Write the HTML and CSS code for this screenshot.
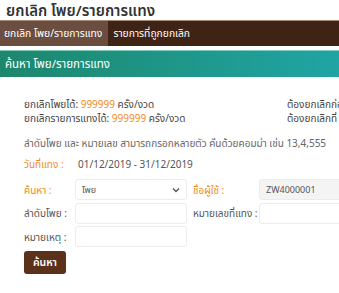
FILE: index.html
```html
<!DOCTYPE html>
<html lang="th">
    <head>
        <meta charset="utf-8"/>
        <title>ยกเลิก โพย/รายการแทง</title>
        <link rel="stylesheet" href="styles.css">
    </head>
    <body>
        <!-- Title -->
        <h1 class="pageTitle">ยกเลิก โพย/รายการแทง</h1>

        <!-- Tabs -->
        <div class="tabs">
            <div class="tab active">ยกเลิก โพย/รายการแทง</div>
            <div class="tab">รายการที่ถูกยกเลิก</div>
        </div>

        <!-- Search panel -->
        <div class="panelHead">ค้นหา โพย/รายการแทง</div>

        <div class="panelBody">
            <div class="limits">
                <div>ยกเลิกโพยได้: <span class="num">999999</span> ครั้ง/งวด</div>
                <div>ต้องยกเลิกก่อน</div>
                <div>ยกเลิกรายการแทงได้: <span class="num">999999</span> ครั้ง/งวด</div>
                <div>ต้องยกเลิกที่</div>
            </div>

            <p class="hint">ลำดับโพย และ หมายเลข สามารถกรอกหลายตัว คั่นด้วยคอมม่า เช่น 13,4,555</p>

            <div class="dateRow">
                <span class="label orange">วันที่แทง :</span>
                <span>01/12/2019 - 31/12/2019</span>
            </div>

            <div class="form">
                <label class="label orange">ค้นหา :</label>
                <div class="select">
                    <span>โพย</span>
                    <svg width="8" height="6" viewBox="0 0 8 6"><path d="M1 1.5 L4 4.5 L7 1.5" fill="none" stroke="#555" stroke-width="1.4"/></svg>
                </div>
                <label class="label orange side">ชื่อผู้ใช้ :</label>
                <div class="input disabled">ZW4000001</div>

                <label class="label">ลำดับโพย :</label>
                <div class="input"></div>
                <label class="label side">หมายเลขที่แทง :</label>
                <div class="input"></div>

                <label class="label">หมายเหตุ :</label>
                <div class="input"></div>
            </div>

            <button class="searchBtn">ค้นหา</button>
        </div>
    </body>
</html>
```

FILE: styles.css
```css
body {
    margin: 0px;
    overflow: hidden;
    font-family: "Noto Sans", "Noto Sans Thai", sans-serif;
    color: #444;
    background-color: #fff;
    width: 440px;
}

.pageTitle {
    margin: 0;
    height: 20px;
    padding-left: 6px;
    font-size: 15px;
    line-height: 20px;
    font-weight: 600;
    color: #333;
}

.tabs {
    display: flex;
    height: 25px;
    background-color: #3f2415;
    border-top: 1px solid #a58a78;
}

.tab {
    color: #fff;
    font-size: 10.3px;
    line-height: 25px;
    padding: 0 5px;
    white-space: nowrap;
}

.tab.active {
    background-color: #6b4e40;
    padding: 0 6px 0 4px;
}

.panelHead {
    margin-top: 4px;
    height: 26px;
    line-height: 26px;
    padding-left: 5px;
    color: #fff;
    font-size: 11.5px;
    background: linear-gradient(to right, #1d876c, #20a6a6 80%, #22aaaa);
    border-top: 1px solid #7fcabb;
}

.panelBody {
    padding: 20px 0 0 24px;
    font-size: 10px;
}

.limits {
    display: grid;
    grid-template-columns: 263px auto;
    line-height: 14px;
}

.num {
    color: #f08a24;
}

.hint {
    margin: 11px 0 0;
    line-height: 14px;
    color: #666;
}

.dateRow {
    display: flex;
    margin-top: 7px;
    line-height: 14px;
    color: #555;
}

.dateRow .label {
    width: 54px;
}

.label {
    color: #555;
    white-space: nowrap;
    line-height: 14px;
}

.label.side {
    padding-left: 6px;
}

.orange {
    color: #f08a24;
}

.form {
    display: grid;
    grid-template-columns: 51px 112px 72px 160px;
    grid-auto-rows: 21px;
    row-gap: 2.5px;
    align-items: center;
    margin-top: 8px;
}

.select, .input {
    box-sizing: border-box;
    height: 21px;
    border: 1px solid #ececec;
    border-radius: 3px;
    font-size: 9px;
    line-height: 19px;
    padding: 0 6px;
    color: #555;
}

.select {
    display: flex;
    justify-content: space-between;
    align-items: center;
}

.input.disabled {
    background-color: #f4f4f4;
}

.searchBtn {
    display: block;
    margin-top: 4px;
    width: 42px;
    height: 23px;
    border: none;
    border-radius: 3px;
    background-color: #5b3219;
    color: #fff;
    font-family: inherit;
    font-size: 10.5px;
    font-weight: 600;
    padding: 0;
}
```
